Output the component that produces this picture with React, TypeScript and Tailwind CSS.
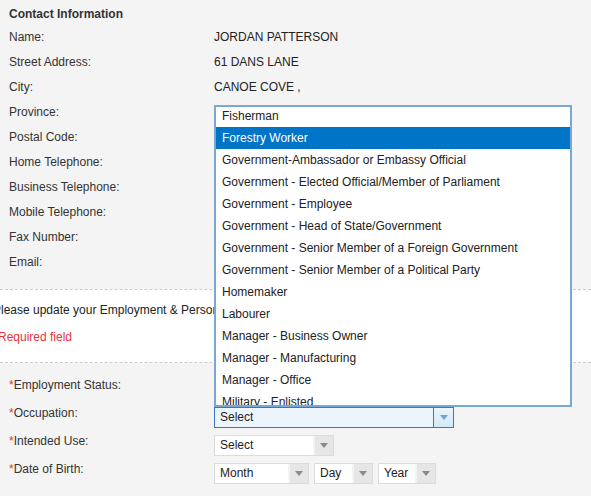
import React from "react";

const occupations = [
  "Fisherman",
  "Forestry Worker",
  "Government-Ambassador or Embassy Official",
  "Government - Elected Official/Member of Parliament",
  "Government - Employee",
  "Government - Head of State/Government",
  "Government - Senior Member of a Foreign Government",
  "Government - Senior Member of a Political Party",
  "Homemaker",
  "Labourer",
  "Manager - Business Owner",
  "Manager - Manufacturing",
  "Manager - Office",
  "Military - Enlisted",
];

const contactRows: [string, string][] = [
  ["Name:", "JORDAN PATTERSON"],
  ["Street Address:", "61 DANS LANE"],
  ["City:", "CANOE COVE ,"],
  ["Province:", ""],
  ["Postal Code:", ""],
  ["Home Telephone:", ""],
  ["Business Telephone:", ""],
  ["Mobile Telephone:", ""],
  ["Fax Number:", ""],
  ["Email:", ""],
];

function Arrow({ color }: { color: string }) {
  return (
    <svg width="8" height="5" viewBox="0 0 8 5">
      <path d="M0 0h8L4 5z" fill={color} />
    </svg>
  );
}

function Select({ label, width, focused }: { label: string; width: string; focused?: boolean }) {
  if (focused) {
    return (
      <div className={`flex h-[21px] ${width} border border-[#3b76c6] bg-[#edf5fc]`}>
        <div className="flex-1 pl-[5px] leading-[19px] text-[#222]">{label}</div>
        <div className="grid w-[20px] place-items-center border-l border-[#3b76c6] bg-gradient-to-b from-[#eaf4fc] to-[#d5e8f7]">
          <Arrow color="#6aa5d5" />
        </div>
      </div>
    );
  }
  return (
    <div className={`flex h-[21px] ${width} border border-[#dcdcdc] bg-white`}>
      <div className="flex-1 pl-[5px] leading-[19px] text-[#222]">{label}</div>
      <div className="grid w-[20px] place-items-center border-l-2 border-[#f4f4f4] bg-[#e6e6e6]">
        <Arrow color="#8a8a8a" />
      </div>
    </div>
  );
}

function Required({ label }: { label: string }) {
  return (
    <div className="w-[205px] shrink-0 leading-[12px] text-[#333]">
      <span className="text-[#e8333a]">*</span>
      {label}
    </div>
  );
}

export default function App() {
  return (
    <div
      className="relative h-[496px] w-[591px] overflow-hidden bg-[#f4f4f4] text-[12px] text-[#333]"
      style={{ fontFamily: "'Liberation Sans', Arial, sans-serif" }}
    >
      <div className="px-[9px] pt-[4px] pb-[15px]">
        <div className="h-[20px] font-bold leading-[20px] text-[#333]">Contact Information</div>
        {contactRows.map(([k, v]) => (
          <div key={k} className="flex h-[25px] items-center">
            <div className="w-[205px] shrink-0">{k}</div>
            <div className="text-[#222]">{v}</div>
          </div>
        ))}
      </div>

      <div className="border-y border-dashed border-[#cccccc] bg-white">
        <div className="ml-[-7px] flex h-[38px] items-center pt-[1px] text-[#222]">
          Please update your Employment &amp; Personal Information below
        </div>
        <div className="ml-[-2px] flex h-[34px] items-start pt-0 text-[#e8333a]">Required field</div>
      </div>

      <div className="flex flex-col gap-[7px] px-[9px] pt-[16px]">
        <div className="flex items-start">
          <Required label="Employment Status:" />
          <Select label="Select" width="w-[240px]" />
        </div>
        <div className="flex items-start">
          <Required label="Occupation:" />
          <Select label="Select" width="w-[240px]" focused />
        </div>
        <div className="flex items-start">
          <Required label="Intended Use:" />
          <Select label="Select" width="w-[120px]" />
        </div>
        <div className="flex items-start">
          <Required label="Date of Birth:" />
          <div className="flex gap-[5px]">
            <Select label="Month" width="w-[95px]" />
            <Select label="Day" width="w-[59px]" />
            <Select label="Year" width="w-[58px]" />
          </div>
        </div>
      </div>

      <div className="absolute left-[214px] top-[105px] h-[302px] w-[358px] overflow-hidden border-2 border-[#7aa8d4] bg-white">
        <div className="mt-[-2px]">
          {occupations.map((o) => (
            <div
              key={o}
              className={`h-[22px] pl-[6px] leading-[22px] ${
                o === "Forestry Worker" ? "bg-[#0074c6] text-white" : "text-[#222]"
              }`}
            >
              {o}
            </div>
          ))}
        </div>
      </div>
    </div>
  );
}
